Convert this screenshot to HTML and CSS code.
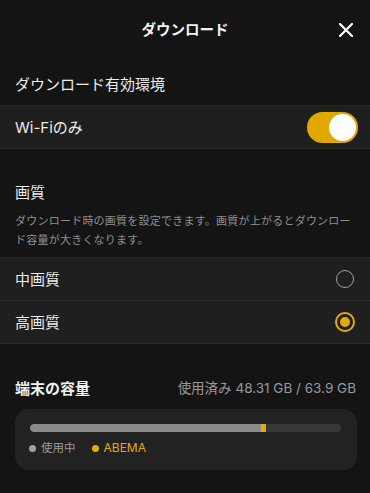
FILE: index.html
```html
<!DOCTYPE html>
<html lang="ja">
<head>
<meta charset="utf-8">
<title>ダウンロード</title>
<link rel="stylesheet" href="styles.css">
</head>
<body>
<div class="sheet">
  <header class="header">
    <span></span>
    <h1 class="title">ダウンロード</h1>
    <button class="close" aria-label="閉じる">
      <svg width="14" height="14" viewBox="0 0 14 14"><path d="M1 1L13 13M13 1L1 13" stroke="#fff" stroke-width="2.2" stroke-linecap="round"/></svg>
    </button>
  </header>

  <div class="label first">ダウンロード有効環境</div>
  <div class="row">
    <span class="row-text">Wi-Fiのみ</span>
    <span class="toggle"><span class="knob"></span></span>
  </div>

  <div class="section">
    <div class="label-inline">画質</div>
    <p class="desc">ダウンロード時の画質を設定できます。画質が上がるとダウンロード容量が大きくなります。</p>
  </div>
  <div class="row">
    <span class="row-text">中画質</span>
    <span class="radio"></span>
  </div>
  <div class="row next">
    <span class="row-text">高画質</span>
    <span class="radio on"></span>
  </div>

  <div class="storage-head">
    <span class="storage-title">端末の容量</span>
    <span class="storage-used">使用済み 48.31 GB / 63.9 GB</span>
  </div>
  <div class="card">
    <div class="track">
      <span class="fill" style="width:231px"></span><span class="fill-abema" style="width:5px"></span>
    </div>
    <div class="legend">
      <span class="item"><span class="dot gray"></span>使用中</span>
      <span class="item abema"><span class="dot yellow"></span>ABEMA</span>
    </div>
  </div>
</div>
</body>
</html>
```

FILE: styles.css
```css
html, body {
  margin: 0;
  padding: 0;
  background: #141414;
}
body {
  font-family: "Inter", "Noto Sans CJK JP", sans-serif;
  color: #ececec;
  width: 370px;
  height: 493px;
  overflow: hidden;
}
.sheet {
  background: #141414;
  border-radius: 10px 10px 0 0;
}
.header {
  height: 60px;
  display: grid;
  grid-template-columns: 1fr auto 1fr;
  align-items: center;
}
.title {
  margin: 0;
  font-size: 14.5px;
  font-weight: 700;
  color: #f2f2f2;
  line-height: 20px;
}
.close {
  justify-self: end;
  margin-right: 17px;
  background: none;
  border: 0;
  padding: 0;
  width: 14px;
  height: 14px;
  display: flex;
}
.label {
  font-size: 15px;
  line-height: 21px;
  padding: 14px 15px 10px;
  color: #ececec;
}
.row {
  height: 42px;
  border-top: 1px solid #2a2a2a;
  border-bottom: 1px solid #2a2a2a;
  background: #1f1f1f;
  display: flex;
  align-items: center;
  justify-content: space-between;
  padding: 0 14px 0 15px;
}
.row.next {
  border-top: 0;
}
.row-text {
  font-size: 15px;
  line-height: 21px;
  color: #ececec;
}
.toggle {
  width: 51px;
  height: 31px;
  border-radius: 16px;
  background: #e1a900;
  display: flex;
  align-items: center;
  justify-content: flex-end;
  padding: 0 2px;
  box-sizing: border-box;
  margin-right: -2px;
}
.knob {
  width: 27px;
  height: 27px;
  border-radius: 50%;
  background: #fff;
}
.section {
  padding: 33px 15px 8px;
}
.label-inline {
  font-size: 15px;
  line-height: 21px;
  color: #ececec;
}
.desc {
  margin: 9px 0 0;
  font-size: 11px;
  letter-spacing: 0.23px;
  line-height: 18.5px;
  color: #8e8e8e;
}
.radio {
  width: 18px;
  height: 18px;
  box-sizing: border-box;
  border: 1.6px solid #a0a0a0;
  border-radius: 50%;
  margin-right: 2px;
}
.radio.on {
  width: 20px;
  height: 20px;
  margin-right: 1px;
  border: 2px solid #e5ac00;
  display: flex;
  align-items: center;
  justify-content: center;
}
.radio.on::after {
  content: "";
  width: 10px;
  height: 10px;
  border-radius: 50%;
  background: #e5ac00;
}
.storage-head {
  display: flex;
  justify-content: space-between;
  align-items: center;
  padding: 34px 14px 10px 15px;
}
.storage-title {
  font-size: 15px;
  line-height: 21px;
  font-weight: 700;
  color: #f0f0f0;
}
.storage-used {
  font-size: 13.5px;
  line-height: 21px;
  color: #9a9a9a;
}
.card {
  margin: 0 13px 0 15px;
  background: #222222;
  border-radius: 14px;
  padding: 15px 16px 14px 15px;
}
.track {
  height: 8px;
  border-radius: 4px;
  background: #383838;
  display: flex;
  overflow: hidden;
}
.fill {
  background: #8b8b8b;
  border-radius: 4px 0 0 4px;
}
.fill-abema {
  background: #e5ac00;
}
.legend {
  display: flex;
  gap: 17px;
  margin-top: 8px;
  line-height: 16px;
  font-size: 11.5px;
  color: #9a9a9a;
}
.item {
  display: flex;
  align-items: center;
  gap: 5px;
}
.item.abema {
  color: #e5ac00;
  font-size: 12px;
}
.dot {
  width: 7px;
  height: 7px;
  border-radius: 50%;
  margin-left: -1px;
}
.dot.gray { background: #a0a0a0; }
.dot.yellow { background: #e5ac00; }
```
